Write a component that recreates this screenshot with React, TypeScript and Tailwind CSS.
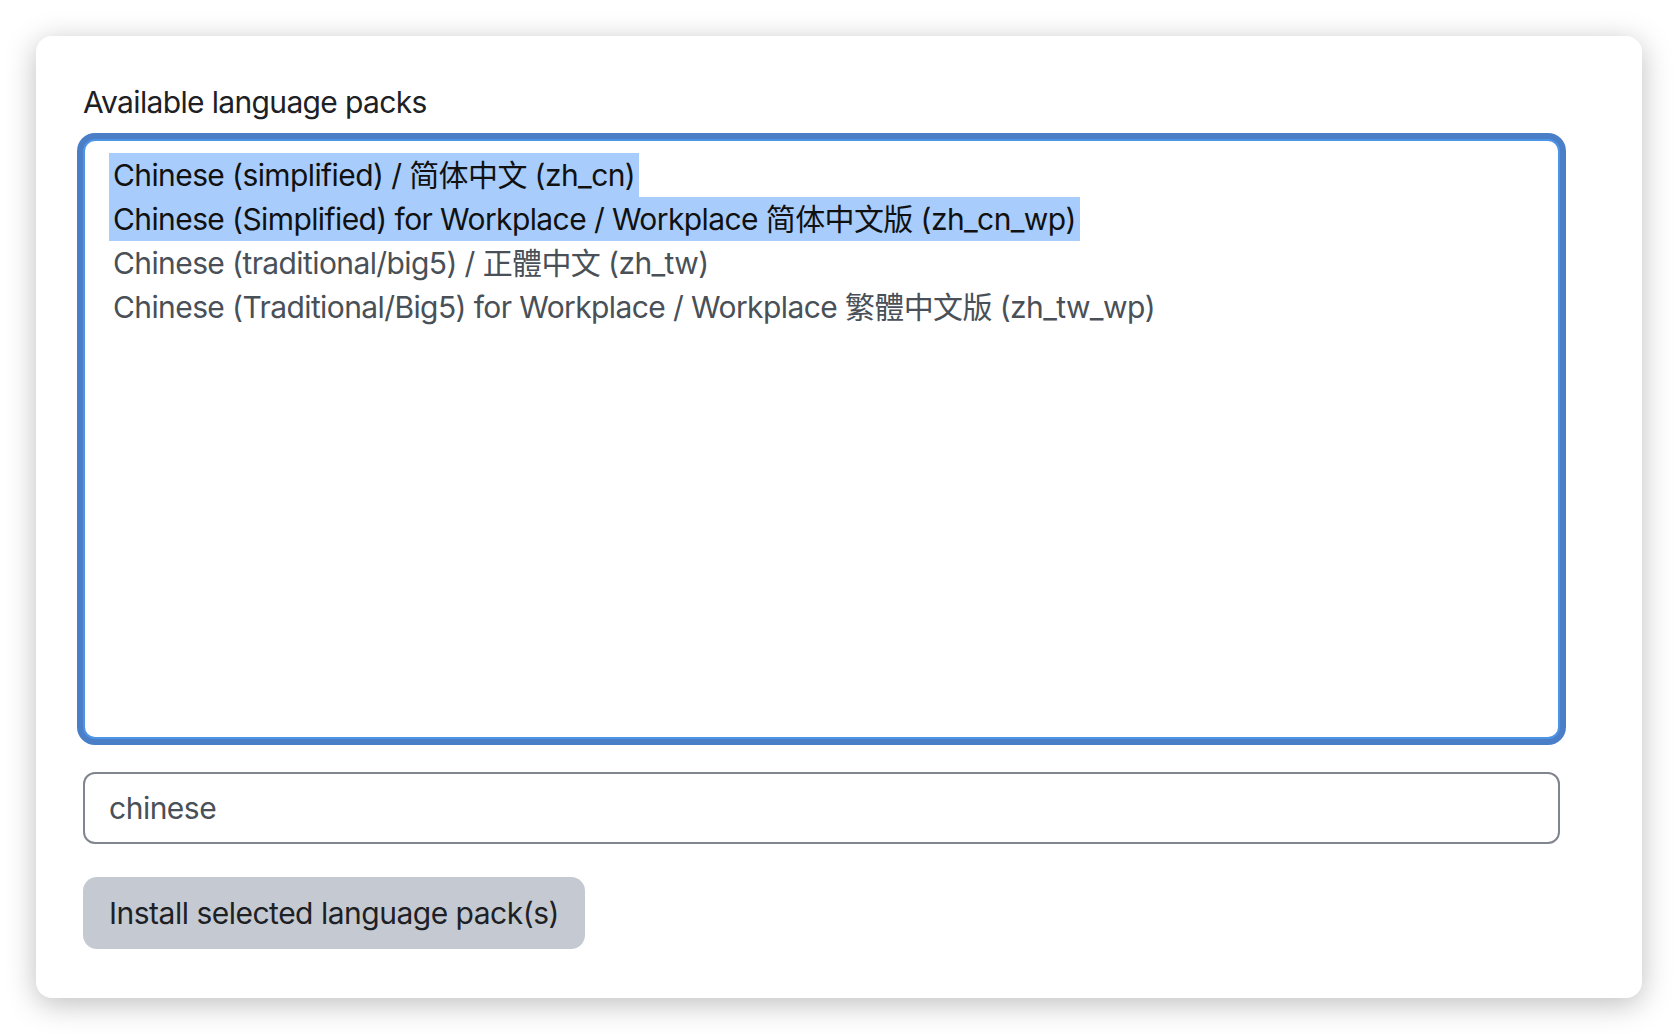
import React from "react";

const options = [
  { text: "Chinese (simplified) / 简体中文 (zh_cn)", selected: true },
  { text: "Chinese (Simplified) for Workplace / Workplace 简体中文版 (zh_cn_wp)", selected: true },
  { text: "Chinese (traditional/big5) / 正體中文 (zh_tw)", selected: false },
  { text: "Chinese (Traditional/Big5) for Workplace / Workplace 繁體中文版 (zh_tw_wp)", selected: false },
];

export default function App() {
  return (
    <div
      className="min-h-screen bg-white p-[36px]"
      style={{ fontFamily: 'Inter, "Noto Sans CJK SC", "Noto Sans CJK TC", sans-serif' }}
    >
      <div className="w-[1606px] h-[962px] bg-white rounded-[16px] shadow-[0_6px_30px_rgba(0,0,0,0.26)] pt-[44px] pl-[47px] pr-[82px]">
        <div className="text-[30px] leading-[45px] text-[#1d2125] mb-[14px] tracking-[-0.65px]">
          Available language packs
        </div>
        <div className="h-[600px] border-2 border-[#4d94e6] rounded-[12px] shadow-[0_0_0_6px_#4a7fc8] px-[24px] pt-[12px] bg-white">
          {options.map((o) => (
            <div
              key={o.text}
              className={
                "w-fit px-[4px] h-[44px] leading-[44px] text-[30px] tracking-[-0.6px] whitespace-nowrap " +
                (o.selected ? "bg-[#a8cdfc] text-[#111111]" : "text-[#495057]")
              }
            >
              {o.text}
            </div>
          ))}
        </div>
        <div className="mt-[33px] h-[72px] border-2 border-[#80858e] rounded-[12px] px-[24px] flex items-center text-[30px] text-[#495057] tracking-[-0.5px]">
          chinese
        </div>
        <div className="mt-[33px] w-fit h-[72px] rounded-[14px] bg-[#c5cad2] px-[26px] flex items-center text-[30px] text-[#1d2125] tracking-[-0.5px]">
          Install selected language pack(s)
        </div>
      </div>
    </div>
  );
}
